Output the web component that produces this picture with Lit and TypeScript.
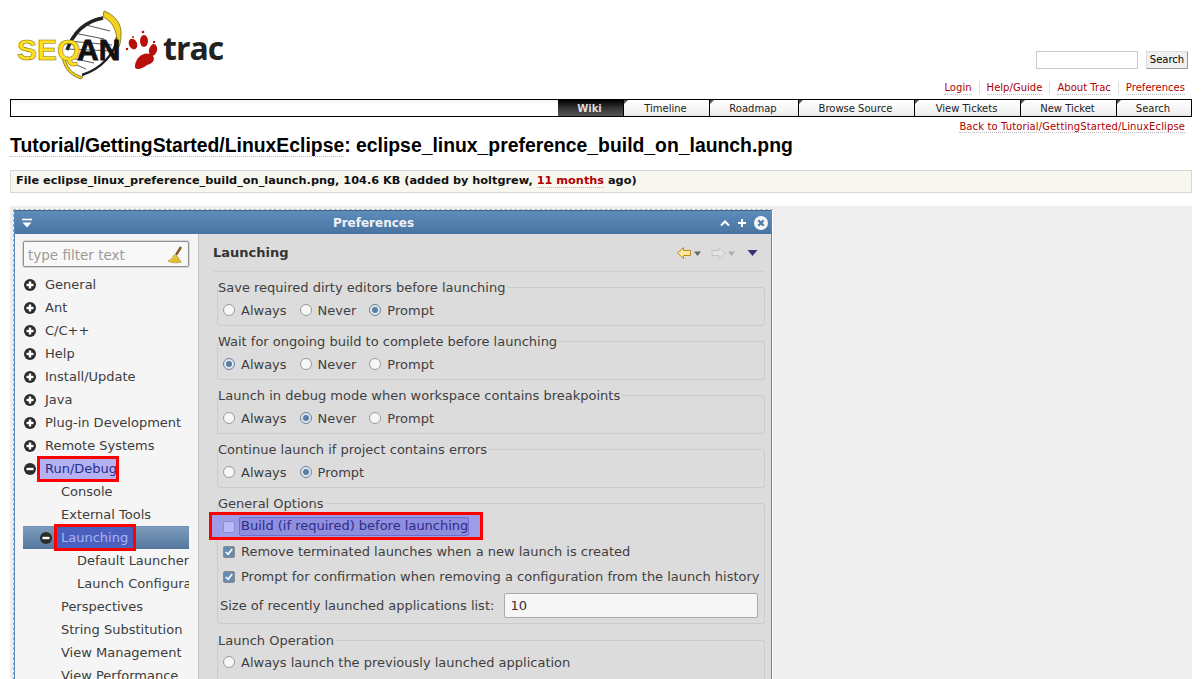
import { LitElement, html, css, svg } from 'lit';
import { customElement } from 'lit/decorators.js';
import { classMap } from 'lit/directives/class-map.js';

interface TreeRow {
  label: string;
  level: number;
  icon?: 'plus' | 'minus';
  selected?: boolean;
  marked?: boolean;
}

const NAV = [
  { label: 'Wiki', width: 65, active: true },
  { label: 'Timeline', width: 86 },
  { label: 'Roadmap', width: 89 },
  { label: 'Browse Source', width: 116 },
  { label: 'View Tickets', width: 106 },
  { label: 'New Ticket', width: 96 },
  { label: 'Search', width: 75 },
];

const TREE: TreeRow[] = [
  { label: 'General', level: 0, icon: 'plus' },
  { label: 'Ant', level: 0, icon: 'plus' },
  { label: 'C/C++', level: 0, icon: 'plus' },
  { label: 'Help', level: 0, icon: 'plus' },
  { label: 'Install/Update', level: 0, icon: 'plus' },
  { label: 'Java', level: 0, icon: 'plus' },
  { label: 'Plug-in Development', level: 0, icon: 'plus' },
  { label: 'Remote Systems', level: 0, icon: 'plus' },
  { label: 'Run/Debug', level: 0, icon: 'minus', marked: true },
  { label: 'Console', level: 1 },
  { label: 'External Tools', level: 1 },
  { label: 'Launching', level: 1, icon: 'minus', selected: true, marked: true },
  { label: 'Default Launchers', level: 2 },
  { label: 'Launch Configurations', level: 2 },
  { label: 'Perspectives', level: 1 },
  { label: 'String Substitution', level: 1 },
  { label: 'View Management', level: 1 },
  { label: 'View Performance', level: 1 },
];

const RADIO_GROUPS = [
  { title: 'Save required dirty editors before launching', options: ['Always', 'Never', 'Prompt'], on: 2 },
  { title: 'Wait for ongoing build to complete before launching', options: ['Always', 'Never', 'Prompt'], on: 0 },
  { title: 'Launch in debug mode when workspace contains breakpoints', options: ['Always', 'Never', 'Prompt'], on: 1 },
  { title: 'Continue launch if project contains errors', options: ['Always', 'Prompt'], on: 1 },
];

@customElement('app-root')
export class AppRoot extends LitElement {
  static styles = css`
    :host {
      display: block;
      width: 1202px;
      height: 679px;
      overflow: hidden;
      background: #fff;
      font-family: 'DejaVu Sans', sans-serif;
      color: #000;
    }
    a { color: #b00000; text-decoration: none; border-bottom: 1px dotted #bbb; }

    .header { display: flex; justify-content: space-between; height: 99px; padding: 0 14px 0 16px; box-sizing: border-box; }
    .logo { display: block; margin-top: 9px; }
    .logo-seq { font: bold 30px 'Liberation Sans', sans-serif; fill: #ffe01f; stroke: #8a7a10; stroke-width: 0.6px; }
    .logo-an { font: bold 30px 'Liberation Sans', sans-serif; fill: #111; stroke: #111; stroke-width: 0.8px; }
    .logo-trac { font: bold 32px 'Open Sans', sans-serif; fill: #222; letter-spacing: -1px; }
    .head-right { display: flex; flex-direction: column; align-items: flex-end; padding-top: 51px; }
    .search { display: flex; gap: 8px; }
    .search-input { width: 100px; height: 16px; border: 1px solid #ccc; background: #fff; }
    .search-btn { width: 42px; height: 18px; box-sizing: border-box; border: 1px solid #999; border-top-color: #ddd; border-left-color: #ddd; background: #f0f0f0; font-size: 10px; line-height: 16px; text-align: center; color: #000; }
    .meta { display: flex; margin-top: 12px; font-size: 10px; line-height: 13px; }
    .meta a { margin: 0 7px; letter-spacing: 0.03px; }
    .meta a:last-child { margin-right: 3px; }
    .meta span { width: 1px; height: 13px; background: #ddd; }

    .nav { display: flex; justify-content: flex-end; margin: 0 10px; height: 18px; border: 1px solid #000; box-sizing: border-box; background: linear-gradient(#f4f4f4, #fff 30%, #fff); }
    .tab { position: relative; box-sizing: border-box; padding-right: 2px; font-size: 10px; line-height: 17px; text-align: center; color: #222; background: linear-gradient(#fff, #f4f4f4 70%, #e6e6e6); border-left: 1px solid #000; white-space: nowrap; }
    .tab::before { content: ''; position: absolute; left: 0; top: 0; border-style: solid; border-width: 4px 4px 0 0; border-color: #555 transparent transparent transparent; }
    .tab.active { background: linear-gradient(#000, #333 50%, #555); color: #ddd; font-weight: bold; border-left: none; }
    .tab.active::before { display: none; }

    .ctx { text-align: right; padding-right: 17px; font-size: 10px; line-height: 13px; margin-top: 3px; }
    .ctx a { letter-spacing: 0.12px; }
    h1 { margin: 0 10px; font: bold 19.36px/24px 'Liberation Sans', sans-serif; height: 26px; white-space: nowrap; }
    h1 span { border-bottom: 1px dotted #bbb; }
    .file { margin: 11px 10px 0; height: 23px; box-sizing: border-box; background: #f7f7f0; border: 1px solid #d7d7d7; padding: 0 5px; font-size: 11.3px; font-weight: bold; line-height: 20px; color: #111; }
    .file .age { color: #b00000; border-bottom: 1px dotted #bbb; }

    .canvas { margin: 13px 10px 0; height: 480px; background: #eeeeee; padding: 3px 0 0 3px; box-sizing: border-box; overflow: hidden; }
    .shot { width: 759px; border-left: 1px dashed #aaa; border-top: 1px dashed #bbb; background: #fff; }
    .window { width: 758px; height: 480px; background: #dcdcdc; border-left: 1px solid #5a8ab8; border-right: 1px solid #5a8ab8; box-sizing: border-box; display: flex; flex-direction: column; }
    .title { flex: none; height: 24px; background: linear-gradient(#5d8cbb, #4a74a1); border-top: 1px solid #3d6690; box-sizing: border-box; display: flex; align-items: center; padding: 0 3px 0 6px; color: #eef2f6; font-size: 12px; font-weight: bold; }
    .title b { flex: 1; text-align: center; padding-right: 6px; }
    .title svg { display: block; }
    .winbtns { display: flex; align-items: center; gap: 7px; }
    .body { flex: 1; display: flex; min-height: 0; }

    .left { width: 175px; flex: none; background: #f5f5f5; border-right: 1px solid #c4c4c4; padding: 7px 0 0 8px; }
    .filter { width: 166px; height: 26px; box-sizing: border-box; border: 1px solid #8f8f8f; border-radius: 2px; background: #f8f8f8; box-shadow: 0 0 0 1px #d8d8d8; display: flex; align-items: center; justify-content: space-between; padding: 1px 3px 0 4px; font-size: 13.5px; color: #9a9a9a; }
    .tree { width: 166px; margin-top: 6px; overflow: hidden; font-size: 13px; color: #3c3c3c; }
    .row { height: 23px; line-height: 23px; display: flex; align-items: center; white-space: nowrap; box-sizing: border-box; }
    .row svg { flex: none; }
    .row.selected { background: linear-gradient(#6f93b8 1px, #7d9cbd 1px, #55789d); }
    .lbl.marked { background: #b3b3f3; color: #2c2c88; outline: 3px solid #f00; line-height: 20px; margin-left: 4px; padding: 0 0 0 5px; width: 71px; }
    .selected .lbl.marked { background: #4b5fbf; color: #a9b3f5; line-height: 21px; margin-left: 5px; padding-left: 4px; width: 72px; }
    .lbl.plain { margin-left: 9px; }

    .right { flex: 1; padding: 0 6px 0 18px; font-size: 13px; color: #3f3f3f; min-width: 0; }
    .page-head { display: flex; align-items: center; justify-content: space-between; height: 38px; margin-left: -4px; padding: 0 7px 0 0; box-sizing: border-box; border-bottom: 1px solid #d0d0d0; font-weight: bold; color: #333; }
    .hist { display: flex; align-items: center; gap: 8px; }
    .hist svg { display: block; }
    .hist svg:last-child { margin-left: 4px; }
    .group { position: relative; border: 1px solid #cbcbcb; border-radius: 3px; margin-top: 15px; height: 39px; box-sizing: border-box; padding: 12px 0 0 5px; }
    .legend { position: absolute; left: 0; top: -8px; background: #dcdcdc; padding-right: 2px; line-height: 15px; white-space: nowrap; }
    .opts { display: flex; gap: 13px; align-items: center; height: 20px; }
    .opt { display: flex; align-items: center; gap: 6px; white-space: nowrap; }
    .radio { width: 10px; height: 10px; border: 1px solid #9a9a9a; border-radius: 50%; background: #f7f7f7; display: flex; align-items: center; justify-content: center; }
    .radio.on { background: #dfe7ef; border-color: #6c8197; }
    .radio.on::after { content: ''; width: 6px; height: 6px; border-radius: 50%; background: #5a7ea3; }
    .general { height: 121px; padding: 9px 0 0 5px; }
    .check-row { display: flex; align-items: center; gap: 6px; height: 25px; white-space: nowrap; }
    .check { width: 12px; height: 12px; box-sizing: border-box; border: 1px solid #8a8a8a; border-radius: 2px; background: #668cb2; flex: none; display: block; }
    .build { margin: 2px 0 2px -11px; padding: 1px 0 0 11px; height: 22px; background: #9d9de6; outline: 3px solid #f00; width: 268px; box-sizing: border-box; color: #2c2c88; }
    .build .empty { background: #b9b9fa; border-color: #8b8bd8; }
    .build .focus { border: 1px solid #6e6ed0; border-radius: 2px; background: #8e8ede; padding: 0 0 1px 1px; line-height: 16px; margin-left: -2px; }
    .size-row { display: flex; align-items: center; gap: 10px; height: 33px; margin-left: -3px; }
    .size-row span { white-space: nowrap; }
    .size-input { flex: 1; margin-right: 6px; height: 25px; box-sizing: border-box; border: 1px solid #aaa; border-radius: 2px; background: #f6f6f6; padding-left: 5px; line-height: 23px; color: #333; }
    .last { margin-top: 16px; height: 60px; padding-top: 11px; }
  `;

  private expander(kind: 'plus' | 'minus') {
    return html`<svg width="12" height="12" viewBox="0 0 12 12">
      <circle cx="6" cy="6" r="6" fill="#2b2b2b"></circle>
      <rect x="2.5" y="4.8" width="7" height="2.4" fill="#fff"></rect>
      ${kind === 'plus' ? svg`<rect x="4.8" y="2.5" width="2.4" height="7" fill="#fff"></rect>` : ''}
    </svg>`;
  }

  private renderLogo() {
    return html`<svg class="logo" width="215" height="72" viewBox="0 0 215 72">
      <path d="M58 24L88 30M53 32L96 36M51 40L98 42M51 48L78 54M56 54L70 60M70 16L94 22" stroke="#555" stroke-width="1" fill="none"></path>
      <path d="M87 9C70 12 58 22 51 41" stroke="#222" stroke-width="3.5" fill="none"></path>
      <path d="M101 28C100 44 85 60 66 66" stroke="#222" stroke-width="2.5" fill="none"></path>
      <path d="M88 2C99 6 106 15 105 26C105 32 104 37 101 41C102 28 100 14 87 8Z" fill="#f2d21f" stroke="#7a6a10" stroke-width="0.8"></path>
      <path d="M49 48C50 58 56 65 67 68L65 70C55 67 48 60 46 48Z" fill="#f2d21f" stroke="#7a6a10" stroke-width="0.8"></path>
      <text class="logo-seq" x="1" y="51">SEQ</text>
      <text class="logo-an" x="61" y="51">AN</text>
      <g fill="#b80f0a">
        <ellipse cx="117" cy="35" rx="4" ry="5.5" transform="rotate(-25 117 35)"></ellipse>
        <ellipse cx="128" cy="32" rx="4" ry="6"></ellipse>
        <ellipse cx="137" cy="41" rx="4" ry="6" transform="rotate(15 137 41)"></ellipse>
        <circle cx="127" cy="23" r="1.3"></circle>
        <circle cx="138" cy="33" r="1.2"></circle>
        <circle cx="111" cy="40" r="1.2"></circle>
        <circle cx="117" cy="28" r="1"></circle>
        <path d="M119 57C120 47 130 41 137 47C140 52 135 55 131 56C127 60 118 62 119 57Z"></path>
      </g>
      <text class="logo-trac" x="147" y="51">trac</text>
    </svg>`;
  }

  private renderTree() {
    return TREE.map((row) => {
      const iconPad = 1 + row.level * 16;
      const textPad = 13 + row.level * 16;
      return html`<div
        class=${classMap({ row: true, selected: !!row.selected })}
        style="padding-left:${row.icon ? iconPad : textPad}px"
      >
        ${row.icon ? this.expander(row.icon) : ''}
        <span class=${classMap({ lbl: true, marked: !!row.marked, plain: !row.marked })}>${row.label}</span>
      </div>`;
    });
  }

  private renderRadios(options: string[], on: number) {
    return html`<div class="opts">
      ${options.map(
        (o, i) => html`<div class="opt"><span class=${classMap({ radio: true, on: i === on })}></span>${o}</div>`
      )}
    </div>`;
  }

  private checkIcon() {
    return html`<svg class="check" viewBox="0 0 12 12"><path d="M2.2 6 L5 8.8 L9.8 2.5" stroke="#fff" stroke-width="2" fill="none"></path></svg>`;
  }

  render() {
    return html`
      <div class="header">
        ${this.renderLogo()}
        <div class="head-right">
          <div class="search">
            <div class="search-input"></div>
            <div class="search-btn">Search</div>
          </div>
          <div class="meta">
            <a>Login</a><span></span><a>Help/Guide</a><span></span><a>About Trac</a><span></span><a>Preferences</a>
          </div>
        </div>
      </div>
      <div class="nav">
        ${NAV.map(
          (n) => html`<div class=${classMap({ tab: true, active: !!n.active })} style="width:${n.width}px">${n.label}</div>`
        )}
      </div>
      <div class="ctx"><a>Back to Tutorial/GettingStarted/LinuxEclipse</a></div>
      <h1><span>Tutorial/GettingStarted/LinuxEclipse</span>: eclipse_linux_preference_build_on_launch.png</h1>
      <div class="file">
        File eclipse_linux_preference_build_on_launch.png, 104.6 KB (added by holtgrew, <span class="age">11 months</span> ago)
      </div>
      <div class="canvas">
        <div class="shot">
          <div class="window">
            <div class="title">
              <svg width="12" height="12" viewBox="0 0 12 12">
                <path d="M1 2.5H11" stroke="#fff" stroke-width="1.6"></path>
                <path d="M1.5 5.5H10.5L6 10.5Z" fill="#fff"></path>
              </svg>
              <b>Preferences</b>
              <div class="winbtns">
                <svg width="10" height="10" viewBox="0 0 10 10"><path d="M1 7.5L5 3.5L9 7.5" stroke="#fff" stroke-width="2" fill="none"></path></svg>
                <svg width="10" height="10" viewBox="0 0 10 10"><path d="M5 1V9M1 5H9" stroke="#fff" stroke-width="2" fill="none"></path></svg>
                <svg width="14" height="14" viewBox="0 0 14 14">
                  <circle cx="7" cy="7" r="7" fill="#f4f6f8"></circle>
                  <path d="M4.3 4.3L9.7 9.7M9.7 4.3L4.3 9.7" stroke="#4f7aa6" stroke-width="2.2"></path>
                </svg>
              </div>
            </div>
            <div class="body">
              <div class="left">
                <div class="filter">
                  <span>type filter text</span>
                  <svg width="18" height="20" viewBox="0 0 18 20">
                    <path d="M14 2L9 10" stroke="#8a5a20" stroke-width="2.4"></path>
                    <path d="M7 10L11 12C12 14 13 16 14.5 17C10 18.5 5 18 1 16C4 15 6 12 7 10Z" fill="#e8c93a" stroke="#a88a1a" stroke-width="0.6"></path>
                    <path d="M8 13L6 17M11 14L10 17.5" stroke="#b8961c" stroke-width="0.7"></path>
                  </svg>
                </div>
                <div class="tree">${this.renderTree()}</div>
              </div>
              <div class="right">
                <div class="page-head">
                  <span>Launching</span>
                  <div class="hist">
                    <svg width="26" height="14" viewBox="0 0 26 14">
                      <path d="M2.5 7L8.5 1.5V4.5H15.5V9.5H8.5V12.5Z" fill="#fbe9a3" stroke="#c48a10"></path>
                      <path d="M19 5.5H26L22.5 10Z" fill="#666"></path>
                    </svg>
                    <svg width="26" height="14" viewBox="0 0 26 14">
                      <path d="M16 7L10 1.5V4.5H3V9.5H10V12.5Z" fill="#e4e4e4" stroke="#c4c4c4"></path>
                      <path d="M19 5.5H26L22.5 10Z" fill="#ababab"></path>
                    </svg>
                    <svg width="11" height="8" viewBox="0 0 11 8"><path d="M0.5 1H10.5L5.5 7Z" fill="#3a2f78"></path></svg>
                  </div>
                </div>
                ${RADIO_GROUPS.map(
                  (g) => html`<div class="group">
                    <div class="legend">${g.title}</div>
                    ${this.renderRadios(g.options, g.on)}
                  </div>`
                )}
                <div class="group general">
                  <div class="legend">General Options</div>
                  <div class="check-row build">
                    <span class="check empty"></span><span class="focus">Build (if required) before launching</span>
                  </div>
                  <div class="check-row">${this.checkIcon()}Remove terminated launches when a new launch is created</div>
                  <div class="check-row">${this.checkIcon()}Prompt for confirmation when removing a configuration from the launch history</div>
                  <div class="size-row"><span>Size of recently launched applications list:</span><div class="size-input">10</div></div>
                </div>
                <div class="group last">
                  <div class="legend">Launch Operation</div>
                  <div class="opts">
                    <div class="opt"><span class="radio"></span>Always launch the previously launched application</div>
                  </div>
                </div>
              </div>
            </div>
          </div>
        </div>
      </div>
    `;
  }
}
